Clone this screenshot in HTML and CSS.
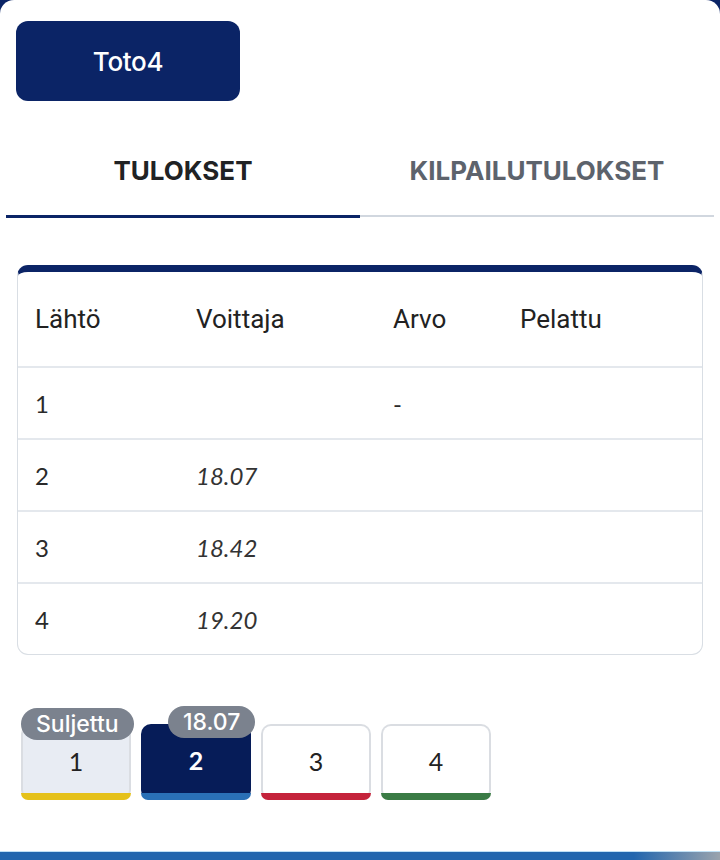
FILE: index.html
```html
<!DOCTYPE html>
<html lang="fi">
<head>
<meta charset="utf-8">
<link rel="stylesheet" href="styles.css">
</head>
<body>
<div class="panel">
  <div class="top">
    <button class="game">Toto4</button>
  </div>
  <div class="tabs">
    <div class="tab active">TULOKSET</div>
    <div class="tab">KILPAILUTULOKSET</div>
  </div>
  <div class="card">
    <div class="row head">
      <div class="c1">Lähtö</div>
      <div class="c2">Voittaja</div>
      <div class="c3">Arvo</div>
      <div class="c4">Pelattu</div>
    </div>
    <div class="row">
      <div class="c1 num">1</div>
      <div class="c2 num it"></div>
      <div class="c3 num">-</div>
      <div class="c4"></div>
    </div>
    <div class="row">
      <div class="c1 num">2</div>
      <div class="c2 num it">18.07</div>
      <div class="c3"></div>
      <div class="c4"></div>
    </div>
    <div class="row">
      <div class="c1 num">3</div>
      <div class="c2 num it">18.42</div>
      <div class="c3"></div>
      <div class="c4"></div>
    </div>
    <div class="row last">
      <div class="c1 num">4</div>
      <div class="c2 num it">19.20</div>
      <div class="c3"></div>
      <div class="c4"></div>
    </div>
  </div>
  <div class="races">
    <div class="race closed yellow"><span class="badge">Suljettu</span>1</div>
    <div class="race selected blue"><span class="badge b2">18.07</span>2</div>
    <div class="race red">3</div>
    <div class="race green">4</div>
  </div>
</div>
<div class="bottombar"></div>
</body>
</html>
```
FILE: styles.css
```css
html, body {
  margin: 0;
  padding: 0;
}
body {
  background: #0b2466;
  width: 720px;
  height: 860px;
  overflow: hidden;
  font-family: Inter, "Noto Sans", sans-serif;
  color: #222;
  display: flex;
  flex-direction: column;
}
.panel {
  background: #fff;
  border-radius: 14px 14px 0 0;
  height: 852px;
  box-sizing: border-box;
  padding-top: 21px;
}
.top {
  padding-left: 16px;
}
.game {
  width: 224px;
  height: 80px;
  border: none;
  border-radius: 12px;
  background: #0b2466;
  color: #fff;
  font-family: Inter, sans-serif;
  font-size: 26px;
  font-weight: 500;
  display: flex;
  align-items: center;
  justify-content: center;
  letter-spacing: -0.3px;
  padding: 0;
}
.tabs {
  display: flex;
  margin: 41px 6px 0 6px;
}
.tab {
  flex: 1;
  text-align: center;
  font-family: Inter, sans-serif;
  font-weight: 700;
  font-size: 26px;
  color: #5d636c;
  box-sizing: border-box;
  border-bottom: 2px solid #d1d7df;
  line-height: 28px;
  height: 75px;
  padding-top: 15px;
}
.tab.active {
  color: #202224;
  border-bottom: 3px solid #0b2466;
  height: 76px;
}
.card {
  margin: 47px 17px 0 17px;
  border: 1px solid #d9dee4;
  border-top: 7px solid #0b2466;
  border-radius: 11px;
  overflow: hidden;
}
.row {
  display: grid;
  grid-template-columns: 161px 197px 127px 1fr;
  align-items: center;
  height: 70px;
  border-bottom: 2px solid #e4e8ed;
  padding-left: 17px;
  font-size: 22px;
}
.row.head {
  height: 94px;
  font-family: Roboto, sans-serif;
  font-size: 26px;
  color: #222;
}
.row.last {
  border-bottom: none;
}
.num {
  font-family: Lato, sans-serif;
  color: #2a2a2a;
  font-size: 24px;
}
.it {
  font-style: italic;
  color: #333;
}
.races {
  display: flex;
  gap: 10px;
  margin: 69px 0 0 21px;
}
.race {
  position: relative;
  width: 110px;
  height: 76px;
  box-sizing: border-box;
  border: 2px solid #dadde2;
  border-bottom-width: 0;
  border-radius: 10px;
  background: #fff;
  display: flex;
  align-items: center;
  justify-content: center;
  font-family: Lato, sans-serif;
  font-size: 25px;
  color: #222;
  padding-bottom: 4px;
}
.race::after {
  content: "";
  position: absolute;
  left: -2px;
  right: -2px;
  bottom: 0;
  height: 7px;
  border-radius: 0 0 10px 10px;
}
.race.yellow::after { background: #e5c11a; }
.race.blue::after { background: #2a70b6; left: 0; right: 0; }
.race.red::after { background: #c4233b; }
.race.green::after { background: #3a7b45; }
.race.closed {
  background: #e8ecf3;
}
.race.selected {
  background: #061c58;
  color: #fff;
  font-weight: 700;
  border: none;
}
.badge {
  position: absolute;
  top: -18px;
  left: -2px;
  height: 32px;
  padding: 0 15px;
  border-radius: 16px;
  background: #7b828e;
  color: #fff;
  font-family: Inter, sans-serif;
  font-weight: 500;
  font-size: 23px;
  line-height: 32px;
  white-space: nowrap;
}
.badge.b2 {
  left: 27px;
}
.bottombar {
  height: 8px;
  background: linear-gradient(90deg, #2266ae 0%, #2266ae 88%, #9aa3ad 100%);
  border-top: 1px solid #bfe0f5;
}
```
